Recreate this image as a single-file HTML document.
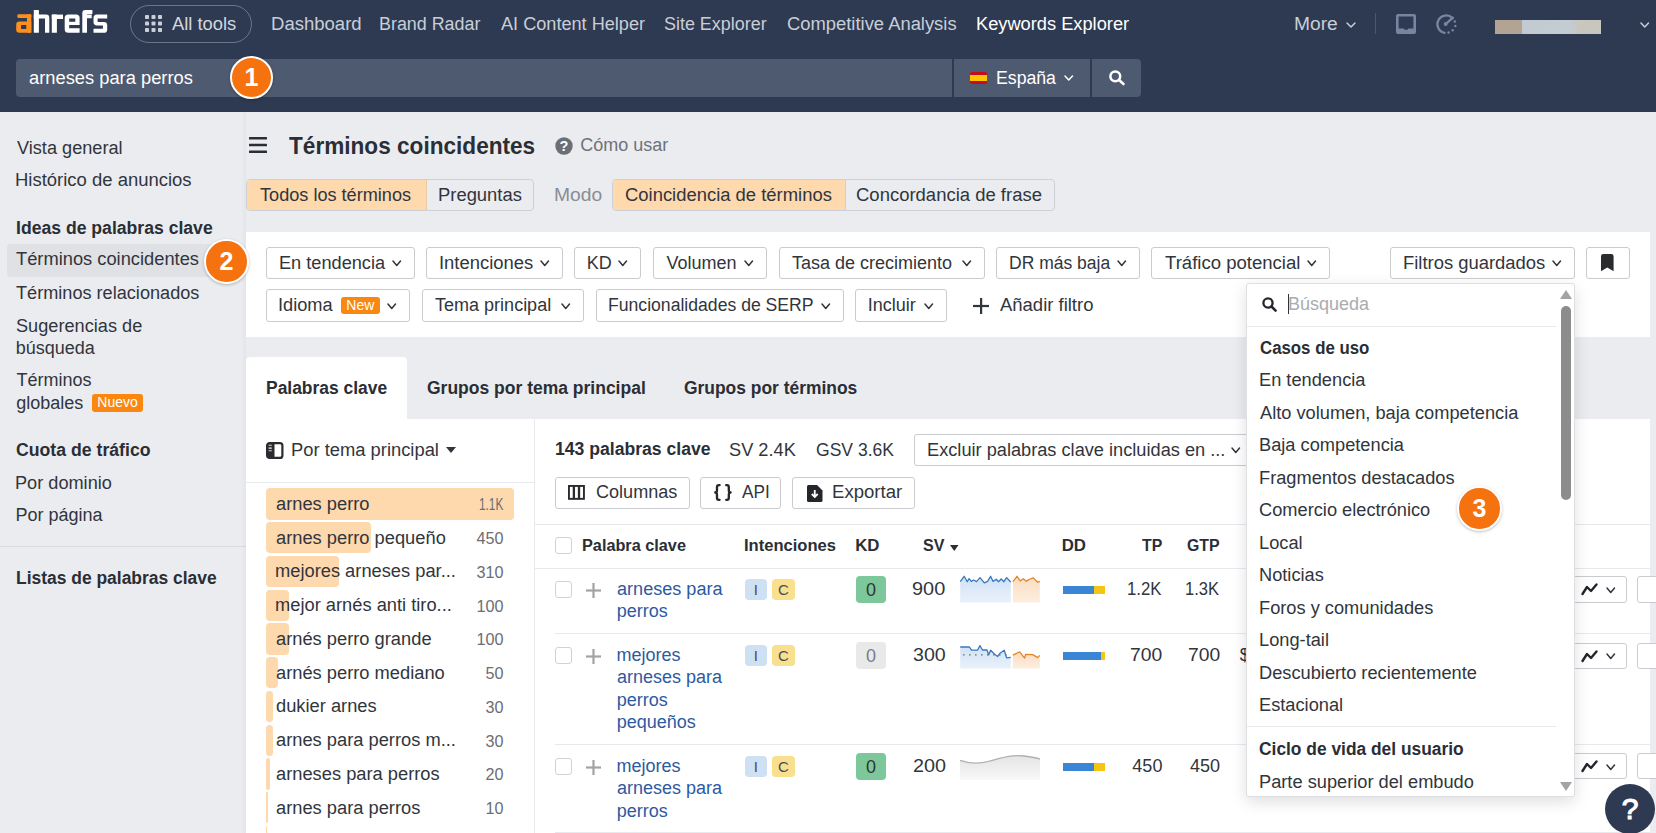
<!DOCTYPE html><html><head><meta charset="utf-8"><style>
html,body{margin:0;padding:0;}
body{width:1656px;height:833px;position:relative;overflow:hidden;background:#ebecef;font-family:"Liberation Sans", sans-serif;}
.t{position:absolute;white-space:nowrap;}
</style></head><body>
<div style="position:absolute;left:0.0px;top:0.0px;width:1656.0px;height:112.0px;background:#2e3a52;"></div>
<svg style="position:absolute;left:0.0px;top:0.0px;overflow:visible;" width="120" height="40" viewBox="0 0 120 40"><g fill="#ff8f1c"><rect x="17.4" y="14.3" width="13.90" height="3.60" rx="1.2"/><rect x="27" y="14.3" width="4.30" height="18.50" rx="0.8"/><path fill-rule="evenodd" d="M19.4 21.5 H31.3 V32.8 H19.4 Q16.2 32.8 16.2 29.6 V24.7 Q16.2 21.5 19.4 21.5 Z M21.8 25.1 H26.3 V29 H21.8 Q21 29 21 28.2 V25.9 Q21 25.1 21.8 25.1 Z"/></g><g fill="#ffffff"><rect x="33.8" y="10" width="5.10" height="22.80" rx="0.6"/><path d="M33.8 14.6 H46 Q49.3 14.6 49.3 17.9 V32.8 H45 V18.6 H33.8 Z"/><rect x="51.8" y="14.6" width="5.10" height="18.20" rx="0.6"/><path d="M51.8 14.6 H63 V19 H51.8 Z"/><path fill-rule="evenodd" d="M68.2 14.5 H76.1 Q79.6 14.5 79.6 18 V25 H69.2 V28.3 H79.6 V32.8 H68.2 Q64.7 32.8 64.7 29.3 V18 Q64.7 14.5 68.2 14.5 Z M69.2 18.6 V21.8 H75.3 V18.6 Z"/><path d="M85.3 10 H92.4 V13.9 H87 V14.6 H91.7 V18.2 H87 V32.8 H82.3 V13 Q82.3 10 85.3 10 Z"/><path d="M97 14.5 H107.2 V18.6 H97.6 V21.9 H103.8 Q107.2 21.9 107.2 25.3 V29.4 Q107.2 32.8 103.8 32.8 H93.5 V28.7 H102.9 V25.5 H96.9 Q93.5 25.5 93.5 22.1 V18 Q93.5 14.5 97 14.5 Z"/></g></svg>
<div style="position:absolute;left:129.5px;top:5.0px;width:122.5px;height:37.5px;border:1px solid rgba(255,255,255,0.30);border-radius:19px;box-sizing:border-box;"></div>
<svg style="position:absolute;left:145.0px;top:15.0px;overflow:visible;" width="17" height="17" viewBox="0 0 17 17"><rect x="0.0" y="0.0" width="4" height="4" rx="0.8" fill="#c9ced8"/><rect x="6.5" y="0.0" width="4" height="4" rx="0.8" fill="#c9ced8"/><rect x="13.0" y="0.0" width="4" height="4" rx="0.8" fill="#c9ced8"/><rect x="0.0" y="6.5" width="4" height="4" rx="0.8" fill="#c9ced8"/><rect x="6.5" y="6.5" width="4" height="4" rx="0.8" fill="#c9ced8"/><rect x="13.0" y="6.5" width="4" height="4" rx="0.8" fill="#c9ced8"/><rect x="0.0" y="13.0" width="4" height="4" rx="0.8" fill="#c9ced8"/><rect x="6.5" y="13.0" width="4" height="4" rx="0.8" fill="#c9ced8"/><rect x="13.0" y="13.0" width="4" height="4" rx="0.8" fill="#c9ced8"/></svg>
<div class="t" style="left:172.46px;top:12.76px;font-size:18px;line-height:23px;font-weight:400;color:#d3d7de;transform:scaleX(1.0186);transform-origin:0 0;">All tools</div>
<div class="t" style="left:270.98px;top:12.76px;font-size:18px;line-height:23px;font-weight:400;color:#c9ced7;transform:scaleX(1.0290);transform-origin:0 0;">Dashboard</div>
<div class="t" style="left:379.43px;top:12.76px;font-size:18px;line-height:23px;font-weight:400;color:#c9ced7;transform:scaleX(0.9932);transform-origin:0 0;">Brand Radar</div>
<div class="t" style="left:500.96px;top:12.76px;font-size:18px;line-height:23px;font-weight:400;color:#c9ced7;transform:scaleX(1.0067);transform-origin:0 0;">AI Content Helper</div>
<div class="t" style="left:664.39px;top:12.76px;font-size:18px;line-height:23px;font-weight:400;color:#c9ced7;transform:scaleX(0.9958);transform-origin:0 0;">Site Explorer</div>
<div class="t" style="left:786.57px;top:12.76px;font-size:18px;line-height:23px;font-weight:400;color:#c9ced7;transform:scaleX(1.0212);transform-origin:0 0;">Competitive Analysis</div>
<div class="t" style="left:975.90px;top:12.76px;font-size:18px;line-height:23px;font-weight:400;color:#ffffff;transform:scaleX(1.0135);transform-origin:0 0;">Keywords Explorer</div>
<div class="t" style="left:1294.33px;top:12.76px;font-size:18px;line-height:23px;font-weight:400;color:#c9ced7;transform:scaleX(1.0663);transform-origin:0 0;">More</div>
<svg style="position:absolute;left:1345.5px;top:21.5px;overflow:visible;" width="10" height="6" viewBox="0 0 10 6"><polyline points="1,1 5.0,5 9,1" fill="none" stroke="#c9ced7" stroke-width="1.5" stroke-linecap="round" stroke-linejoin="round"/></svg>
<div style="position:absolute;left:1375.0px;top:13.0px;width:1.0px;height:21.0px;background:rgba(255,255,255,0.15);"></div>
<svg style="position:absolute;left:1396.0px;top:14.0px;overflow:visible;" width="20" height="20" viewBox="0 0 20 20"><rect x="1.3" y="1.3" width="17.4" height="17.4" rx="0.8" fill="none" stroke="#7884a0" stroke-width="2.6"/><path d="M1 14.4 H8.2 V15.8 H11.8 V14.4 H19 V19.2 H1 Z" fill="#7884a0"/></svg>
<svg style="position:absolute;left:1435.5px;top:14.0px;overflow:visible;" width="21" height="20" viewBox="0 0 21 20"><g fill="#7884a0"><path d="M16.6 4.2 A8.8 8.8 0 1 0 8.6 18.9" fill="none" stroke="#7884a0" stroke-width="2.3" stroke-linecap="round"/><path d="M9.7 10.1 L16.8 3.6" stroke="#7884a0" stroke-width="2.3" stroke-linecap="round"/><circle cx="9.7" cy="10.1" r="2"/><circle cx="18.8" cy="7.5" r="1.25"/><circle cx="19.3" cy="12" r="1.25"/><circle cx="16.7" cy="16.2" r="1.25"/><circle cx="12.6" cy="18.4" r="1.25"/></g></svg>
<div style="position:absolute;left:1494.6px;top:20px;width:106.7px;height:14px;background:linear-gradient(90deg,#b3a393 0%,#b3a393 25%,#c2cad1 25.5%,#c4ccd3 70%,#c9c6be 80%,#c9c6be 100%);"></div>
<svg style="position:absolute;left:1640.2px;top:22.0px;overflow:visible;" width="9.5" height="6" viewBox="0 0 9.5 6"><polyline points="1,1 4.75,5 8.5,1" fill="none" stroke="#c9ced7" stroke-width="1.5" stroke-linecap="round" stroke-linejoin="round"/></svg>
<div style="position:absolute;left:16.0px;top:58.6px;width:936.0px;height:38.2px;background:#4e5a70;border-radius:4px 0 0 4px;"></div>
<div style="position:absolute;left:954.0px;top:58.6px;width:136.3px;height:38.2px;background:#4e5a70;"></div>
<div style="position:absolute;left:1092.0px;top:58.6px;width:49.0px;height:38.2px;background:#4e5a70;border-radius:0 4px 4px 0;"></div>
<div class="t" style="left:29.22px;top:67.26px;font-size:18px;line-height:23px;font-weight:400;color:#ffffff;transform:scaleX(1.0171);transform-origin:0 0;">arneses para perros</div>
<svg style="position:absolute;left:970.0px;top:71.6px;overflow:visible;" width="17" height="12" viewBox="0 0 17 12"><rect width="17" height="12" rx="2" fill="#c60b1e"/><rect y="3" width="17" height="6" fill="#ffc400"/></svg>
<div class="t" style="left:996.25px;top:67.06px;font-size:18px;line-height:23px;font-weight:400;color:#ffffff;transform:scaleX(0.9820);transform-origin:0 0;">España</div>
<svg style="position:absolute;left:1064.0px;top:75.0px;overflow:visible;" width="9.5" height="6" viewBox="0 0 9.5 6"><polyline points="1,1 4.75,5 8.5,1" fill="none" stroke="#ffffff" stroke-width="1.5" stroke-linecap="round" stroke-linejoin="round"/></svg>
<svg style="position:absolute;left:1108.5px;top:70.0px;overflow:visible;" width="17" height="15" viewBox="0 0 17 15"><circle cx="6.3" cy="6.3" r="4.9" fill="none" stroke="#fff" stroke-width="2.5"/><line x1="10" y1="10" x2="14.5" y2="14" stroke="#fff" stroke-width="2.6" stroke-linecap="round"/></svg>
<div style="position:absolute;left:6.5px;top:244.2px;width:233.5px;height:32.8px;background:#dfe1e5;border-radius:4px;"></div>
<div class="t" style="left:16.82px;top:137.36px;font-size:18px;line-height:23px;font-weight:400;color:#31353c;transform:scaleX(1.0079);transform-origin:0 0;">Vista general</div>
<div class="t" style="left:15.38px;top:168.76px;font-size:18px;line-height:23px;font-weight:400;color:#31353c;transform:scaleX(1.0261);transform-origin:0 0;">Histórico de anuncios</div>
<div class="t" style="left:15.72px;top:217.16px;font-size:18px;line-height:23px;font-weight:700;color:#2a2e35;transform:scaleX(0.9779);transform-origin:0 0;">Ideas de palabras clave</div>
<div class="t" style="left:16.49px;top:248.46px;font-size:18px;line-height:23px;font-weight:400;color:#31353c;transform:scaleX(1.0161);transform-origin:0 0;">Términos coincidentes</div>
<div class="t" style="left:16.49px;top:281.96px;font-size:18px;line-height:23px;font-weight:400;color:#31353c;transform:scaleX(1.0070);transform-origin:0 0;">Términos relacionados</div>
<div class="t" style="left:16.08px;top:314.76px;font-size:18px;line-height:23px;font-weight:400;color:#31353c;transform:scaleX(1.0092);transform-origin:0 0;">Sugerencias de</div>
<div class="t" style="left:15.74px;top:336.96px;font-size:18px;line-height:23px;font-weight:400;color:#31353c;">búsqueda</div>
<div class="t" style="left:16.50px;top:368.86px;font-size:18px;line-height:23px;font-weight:400;color:#31353c;">Términos</div>
<div class="t" style="left:16.14px;top:391.86px;font-size:18px;line-height:23px;font-weight:400;color:#31353c;">globales</div>
<div class="t" style="left:16.18px;top:438.76px;font-size:18px;line-height:23px;font-weight:700;color:#2a2e35;transform:scaleX(0.9818);transform-origin:0 0;">Cuota de tráfico</div>
<div class="t" style="left:15.41px;top:471.76px;font-size:18px;line-height:23px;font-weight:400;color:#31353c;transform:scaleX(1.0084);transform-origin:0 0;">Por dominio</div>
<div class="t" style="left:15.42px;top:504.06px;font-size:18px;line-height:23px;font-weight:400;color:#31353c;">Por página</div>
<div class="t" style="left:15.73px;top:567.36px;font-size:18px;line-height:23px;font-weight:700;color:#2a2e35;transform:scaleX(0.9689);transform-origin:0 0;">Listas de palabras clave</div>
<div style="position:absolute;left:92.2px;top:394px;width:50.7px;height:17.7px;background:#f98710;border-radius:3px;color:#fff;font-size:14px;line-height:17.7px;text-align:center;font-weight:400;">Nuevo</div>
<div style="position:absolute;left:0.0px;top:545.5px;width:246.0px;height:1.0px;background:#d9dbe0;"></div>
<div style="position:absolute;left:240.5px;top:112.0px;width:5.5px;height:721.0px;background:linear-gradient(90deg,rgba(0,0,0,0),rgba(0,0,0,0.03));"></div>
<svg style="position:absolute;left:249.0px;top:137.0px;overflow:visible;" width="18" height="16" viewBox="0 0 18 16"><rect y="0" width="18" height="2.6" rx="0.5" fill="#2a2e35"/><rect y="6.7" width="18" height="2.6" rx="0.5" fill="#2a2e35"/><rect y="13.4" width="18" height="2.6" rx="0.5" fill="#2a2e35"/></svg>
<div class="t" style="left:289.15px;top:130.08px;font-size:24px;line-height:31px;font-weight:700;color:#2a2e35;transform:scaleX(0.9418);transform-origin:0 0;">Términos coincidentes</div>
<svg style="position:absolute;left:554.5px;top:136.5px;overflow:visible;" width="18" height="18" viewBox="0 0 18 18"><circle cx="9" cy="9" r="8.7" fill="#6b6e74"/><text x="9" y="14.3" text-anchor="middle" font-family="Liberation Sans" font-weight="700" font-size="14.5" fill="#fff">?</text></svg>
<div class="t" style="left:580.19px;top:134.26px;font-size:18px;line-height:23px;font-weight:400;color:#6f7277;">Cómo usar</div>
<div style="position:absolute;left:246.1px;top:179.2px;width:288.3px;height:32.3px;border:1px solid #cdd0d4;border-radius:4px;box-sizing:border-box;overflow:hidden;"><div style="position:absolute;left:-1px;top:-1px;width:181.4px;height:32.3px;background:#fdd9ad;border:1px solid #e9caa3;box-sizing:border-box;"></div></div>
<div class="t" style="left:260.39px;top:183.76px;font-size:18px;line-height:23px;font-weight:400;color:#31353c;transform:scaleX(1.0066);transform-origin:0 0;">Todos los términos</div>
<div class="t" style="left:437.89px;top:183.76px;font-size:18px;line-height:23px;font-weight:400;color:#31353c;transform:scaleX(1.0222);transform-origin:0 0;">Preguntas</div>
<div class="t" style="left:553.72px;top:183.76px;font-size:18px;line-height:23px;font-weight:400;color:#8a8d93;transform:scaleX(1.0702);transform-origin:0 0;">Modo</div>
<div style="position:absolute;left:612.1px;top:179.2px;width:443.2px;height:32.3px;border:1px solid #cdd0d4;border-radius:4px;box-sizing:border-box;overflow:hidden;"><div style="position:absolute;left:-1px;top:-1px;width:233.5px;height:32.3px;background:#fdd9ad;border:1px solid #e9caa3;box-sizing:border-box;"></div></div>
<div class="t" style="left:624.76px;top:183.76px;font-size:18px;line-height:23px;font-weight:400;color:#31353c;transform:scaleX(1.0237);transform-origin:0 0;">Coincidencia de términos</div>
<div class="t" style="left:856.26px;top:183.76px;font-size:18px;line-height:23px;font-weight:400;color:#31353c;transform:scaleX(1.0268);transform-origin:0 0;">Concordancia de frase</div>
<div style="position:absolute;left:245.6px;top:232.1px;width:1404.4px;height:104.7px;background:#fff;"></div>
<div style="position:absolute;left:266.1px;top:247.3px;width:149.4px;height:31.7px;border:1px solid #c9cbcf;border-radius:3px;box-sizing:border-box;background:#fff;"></div>
<div class="t" style="left:278.51px;top:251.66px;font-size:18px;line-height:23px;font-weight:400;color:#31353c;transform:scaleX(1.0096);transform-origin:0 0;">En tendencia</div>
<svg style="position:absolute;left:392.2px;top:260.4px;overflow:visible;" width="9.5" height="6.5" viewBox="0 0 9.5 6.5"><polyline points="1,1 4.75,5.5 8.5,1" fill="none" stroke="#31353c" stroke-width="1.5" stroke-linecap="round" stroke-linejoin="round"/></svg>
<div style="position:absolute;left:426.4px;top:247.3px;width:137.0px;height:31.7px;border:1px solid #c9cbcf;border-radius:3px;box-sizing:border-box;background:#fff;"></div>
<div class="t" style="left:438.60px;top:251.66px;font-size:18px;line-height:23px;font-weight:400;color:#31353c;transform:scaleX(1.0239);transform-origin:0 0;">Intenciones</div>
<svg style="position:absolute;left:540.1px;top:260.4px;overflow:visible;" width="9.5" height="6.5" viewBox="0 0 9.5 6.5"><polyline points="1,1 4.75,5.5 8.5,1" fill="none" stroke="#31353c" stroke-width="1.5" stroke-linecap="round" stroke-linejoin="round"/></svg>
<div style="position:absolute;left:574.3px;top:247.3px;width:67.2px;height:31.7px;border:1px solid #c9cbcf;border-radius:3px;box-sizing:border-box;background:#fff;"></div>
<div class="t" style="left:586.72px;top:251.66px;font-size:18px;line-height:23px;font-weight:400;color:#31353c;">KD</div>
<svg style="position:absolute;left:618.2px;top:260.4px;overflow:visible;" width="9.5" height="6.5" viewBox="0 0 9.5 6.5"><polyline points="1,1 4.75,5.5 8.5,1" fill="none" stroke="#31353c" stroke-width="1.5" stroke-linecap="round" stroke-linejoin="round"/></svg>
<div style="position:absolute;left:652.6px;top:247.3px;width:114.9px;height:31.7px;border:1px solid #c9cbcf;border-radius:3px;box-sizing:border-box;background:#fff;"></div>
<div class="t" style="left:666.42px;top:251.66px;font-size:18px;line-height:23px;font-weight:400;color:#31353c;">Volumen</div>
<svg style="position:absolute;left:744.2px;top:260.4px;overflow:visible;" width="9.5" height="6.5" viewBox="0 0 9.5 6.5"><polyline points="1,1 4.75,5.5 8.5,1" fill="none" stroke="#31353c" stroke-width="1.5" stroke-linecap="round" stroke-linejoin="round"/></svg>
<div style="position:absolute;left:778.5px;top:247.3px;width:206.9px;height:31.7px;border:1px solid #c9cbcf;border-radius:3px;box-sizing:border-box;background:#fff;"></div>
<div class="t" style="left:792.00px;top:251.66px;font-size:18px;line-height:23px;font-weight:400;color:#31353c;">Tasa de crecimiento</div>
<svg style="position:absolute;left:962.1px;top:260.4px;overflow:visible;" width="9.5" height="6.5" viewBox="0 0 9.5 6.5"><polyline points="1,1 4.75,5.5 8.5,1" fill="none" stroke="#31353c" stroke-width="1.5" stroke-linecap="round" stroke-linejoin="round"/></svg>
<div style="position:absolute;left:996.4px;top:247.3px;width:143.8px;height:31.7px;border:1px solid #c9cbcf;border-radius:3px;box-sizing:border-box;background:#fff;"></div>
<div class="t" style="left:1008.86px;top:251.66px;font-size:18px;line-height:23px;font-weight:400;color:#31353c;transform:scaleX(0.9721);transform-origin:0 0;">DR más baja</div>
<svg style="position:absolute;left:1117.0px;top:260.4px;overflow:visible;" width="9.5" height="6.5" viewBox="0 0 9.5 6.5"><polyline points="1,1 4.75,5.5 8.5,1" fill="none" stroke="#31353c" stroke-width="1.5" stroke-linecap="round" stroke-linejoin="round"/></svg>
<div style="position:absolute;left:1151.2px;top:247.3px;width:179.2px;height:31.7px;border:1px solid #c9cbcf;border-radius:3px;box-sizing:border-box;background:#fff;"></div>
<div class="t" style="left:1164.68px;top:251.66px;font-size:18px;line-height:23px;font-weight:400;color:#31353c;transform:scaleX(1.0302);transform-origin:0 0;">Tráfico potencial</div>
<svg style="position:absolute;left:1307.2px;top:260.4px;overflow:visible;" width="9.5" height="6.5" viewBox="0 0 9.5 6.5"><polyline points="1,1 4.75,5.5 8.5,1" fill="none" stroke="#31353c" stroke-width="1.5" stroke-linecap="round" stroke-linejoin="round"/></svg>
<div style="position:absolute;left:1390.2px;top:247.3px;width:185.1px;height:31.7px;border:1px solid #c9cbcf;border-radius:3px;box-sizing:border-box;background:#fff;"></div>
<div class="t" style="left:1402.59px;top:251.66px;font-size:18px;line-height:23px;font-weight:400;color:#31353c;transform:scaleX(1.0231);transform-origin:0 0;">Filtros guardados</div>
<svg style="position:absolute;left:1552.0px;top:260.4px;overflow:visible;" width="9.5" height="6.5" viewBox="0 0 9.5 6.5"><polyline points="1,1 4.75,5.5 8.5,1" fill="none" stroke="#31353c" stroke-width="1.5" stroke-linecap="round" stroke-linejoin="round"/></svg>
<div style="position:absolute;left:1586.2px;top:247.3px;width:43.4px;height:31.7px;border:1px solid #c9cbcf;border-radius:3px;box-sizing:border-box;background:#fff;"></div>
<svg style="position:absolute;left:1601.4px;top:253.8px;overflow:visible;" width="12.6" height="17.3" viewBox="0 0 12.6 17.3"><path d="M0 2.2 Q0 0 2.2 0 H10.4 Q12.6 0 12.6 2.2 V17.3 L6.3 13.6 L0 17.3 Z" fill="#2a2c30"/></svg>
<div style="position:absolute;left:266.1px;top:289.2px;width:144.3px;height:32.4px;border:1px solid #c9cbcf;border-radius:3px;box-sizing:border-box;background:#fff;"></div>
<div class="t" style="left:278.32px;top:293.76px;font-size:18px;line-height:23px;font-weight:400;color:#31353c;transform:scaleX(1.0121);transform-origin:0 0;">Idioma</div>
<svg style="position:absolute;left:387.1px;top:302.6px;overflow:visible;" width="9.5" height="6.5" viewBox="0 0 9.5 6.5"><polyline points="1,1 4.75,5.5 8.5,1" fill="none" stroke="#31353c" stroke-width="1.5" stroke-linecap="round" stroke-linejoin="round"/></svg>
<div style="position:absolute;left:341px;top:297px;width:38.7px;height:16.8px;background:#f98710;border-radius:3px;color:#fff;font-size:14px;line-height:16.8px;text-align:center;">New</div>
<div style="position:absolute;left:421.6px;top:289.2px;width:162.8px;height:32.4px;border:1px solid #c9cbcf;border-radius:3px;box-sizing:border-box;background:#fff;"></div>
<div class="t" style="left:435.10px;top:293.76px;font-size:18px;line-height:23px;font-weight:400;color:#31353c;">Tema principal</div>
<svg style="position:absolute;left:561.1px;top:302.6px;overflow:visible;" width="9.5" height="6.5" viewBox="0 0 9.5 6.5"><polyline points="1,1 4.75,5.5 8.5,1" fill="none" stroke="#31353c" stroke-width="1.5" stroke-linecap="round" stroke-linejoin="round"/></svg>
<div style="position:absolute;left:595.6px;top:289.2px;width:248.8px;height:32.4px;border:1px solid #c9cbcf;border-radius:3px;box-sizing:border-box;background:#fff;"></div>
<div class="t" style="left:608.06px;top:293.76px;font-size:18px;line-height:23px;font-weight:400;color:#31353c;transform:scaleX(0.9783);transform-origin:0 0;">Funcionalidades de SERP</div>
<svg style="position:absolute;left:821.1px;top:302.6px;overflow:visible;" width="9.5" height="6.5" viewBox="0 0 9.5 6.5"><polyline points="1,1 4.75,5.5 8.5,1" fill="none" stroke="#31353c" stroke-width="1.5" stroke-linecap="round" stroke-linejoin="round"/></svg>
<div style="position:absolute;left:855.4px;top:289.2px;width:91.6px;height:32.4px;border:1px solid #c9cbcf;border-radius:3px;box-sizing:border-box;background:#fff;"></div>
<div class="t" style="left:867.64px;top:293.76px;font-size:18px;line-height:23px;font-weight:400;color:#31353c;">Incluir</div>
<svg style="position:absolute;left:923.8px;top:302.6px;overflow:visible;" width="9.5" height="6.5" viewBox="0 0 9.5 6.5"><polyline points="1,1 4.75,5.5 8.5,1" fill="none" stroke="#31353c" stroke-width="1.5" stroke-linecap="round" stroke-linejoin="round"/></svg>
<svg style="position:absolute;left:972.5px;top:298.0px;overflow:visible;" width="16" height="16" viewBox="0 0 16 16"><rect x="7" y="0" width="2.2" height="16" fill="#31353c"/><rect x="0" y="6.9" width="16" height="2.2" fill="#31353c"/></svg>
<div class="t" style="left:1000.36px;top:293.76px;font-size:18px;line-height:23px;font-weight:400;color:#31353c;transform:scaleX(1.0261);transform-origin:0 0;">Añadir filtro</div>
<div style="position:absolute;left:246px;top:356.7px;width:160.6px;height:62px;background:#fff;border-radius:4px 4px 0 0;"></div>
<div class="t" style="left:266.13px;top:376.86px;font-size:18px;line-height:23px;font-weight:700;color:#2a2e35;transform:scaleX(0.9686);transform-origin:0 0;">Palabras clave</div>
<div class="t" style="left:426.98px;top:376.86px;font-size:18px;line-height:23px;font-weight:700;color:#2a2e35;transform:scaleX(0.9721);transform-origin:0 0;">Grupos por tema principal</div>
<div class="t" style="left:684.49px;top:376.86px;font-size:18px;line-height:23px;font-weight:700;color:#2a2e35;transform:scaleX(0.9677);transform-origin:0 0;">Grupos por términos</div>
<div style="position:absolute;left:246.0px;top:418.5px;width:1404.0px;height:414.5px;background:#fff;"></div>
<svg style="position:absolute;left:266.1px;top:442.0px;overflow:visible;" width="17.5" height="17" viewBox="0 0 17.5 17"><rect x="1.1" y="1.1" width="15.3" height="14.8" rx="2.5" fill="none" stroke="#2a2c30" stroke-width="2.2"/><rect x="1" y="1" width="7.5" height="15" rx="1.5" fill="#2a2c30"/><rect x="2.6" y="2.7" width="3.2" height="1.2" fill="#bbb"/><rect x="2.6" y="5.5" width="3.2" height="1.2" fill="#fff"/><rect x="2.6" y="8.1" width="3.2" height="1.2" fill="#bbb"/></svg>
<div class="t" style="left:290.79px;top:439.26px;font-size:18px;line-height:23px;font-weight:400;color:#31353c;transform:scaleX(1.0198);transform-origin:0 0;">Por tema principal</div>
<svg style="position:absolute;left:446.0px;top:447.0px;overflow:visible;" width="10" height="6" viewBox="0 0 10 6"><path d="M0 0 H10 L5 6 Z" fill="#31353c"/></svg>
<div style="position:absolute;left:246.0px;top:482.0px;width:287.5px;height:1.0px;background:#e7e9ec;"></div>
<div style="position:absolute;left:534.0px;top:418.5px;width:1.0px;height:414.5px;background:#e7e9ec;"></div>
<div style="position:absolute;left:266.2px;top:488.2px;width:247.4px;height:31.4px;background:#fdd9ad;border-radius:4px;"></div>
<div class="t" style="left:275.62px;top:492.86px;font-size:18px;line-height:23px;font-weight:400;color:#31353c;transform:scaleX(1.0160);transform-origin:0 0;">arnes perro</div>
<div class="t" style="left:478.60px;top:494.49px;font-size:16.2px;line-height:21px;font-weight:400;color:#6b6e74;transform:scaleX(0.7302);transform-origin:0 0;">1.1K</div>
<div style="position:absolute;left:266.2px;top:522.0px;width:104.8px;height:31.4px;background:#fdd9ad;border-radius:4px;"></div>
<div class="t" style="left:275.62px;top:526.61px;font-size:18px;line-height:23px;font-weight:400;color:#31353c;transform:scaleX(1.0160);transform-origin:0 0;">arnes perro pequeño</div>
<div class="t" style="left:476.40px;top:528.24px;font-size:16.2px;line-height:21px;font-weight:400;color:#6b6e74;">450</div>
<div style="position:absolute;left:266.2px;top:555.7px;width:72.8px;height:31.4px;background:#fdd9ad;border-radius:4px;"></div>
<div class="t" style="left:275.19px;top:560.36px;font-size:18px;line-height:23px;font-weight:400;color:#31353c;transform:scaleX(1.0160);transform-origin:0 0;">mejores arneses par...</div>
<div class="t" style="left:476.40px;top:561.99px;font-size:16.2px;line-height:21px;font-weight:400;color:#6b6e74;">310</div>
<div style="position:absolute;left:266.2px;top:589.5px;width:22.7px;height:31.4px;background:#fdd9ad;border-radius:4px;"></div>
<div class="t" style="left:275.19px;top:594.11px;font-size:18px;line-height:23px;font-weight:400;color:#31353c;transform:scaleX(1.0160);transform-origin:0 0;">mejor arnés anti tiro...</div>
<div class="t" style="left:476.40px;top:595.74px;font-size:16.2px;line-height:21px;font-weight:400;color:#6b6e74;">100</div>
<div style="position:absolute;left:266.2px;top:623.2px;width:22.7px;height:31.4px;background:#fdd9ad;border-radius:4px;"></div>
<div class="t" style="left:275.62px;top:627.86px;font-size:18px;line-height:23px;font-weight:400;color:#31353c;transform:scaleX(1.0160);transform-origin:0 0;">arnés perro grande</div>
<div class="t" style="left:476.40px;top:629.49px;font-size:16.2px;line-height:21px;font-weight:400;color:#6b6e74;">100</div>
<div style="position:absolute;left:266.2px;top:657.0px;width:11.8px;height:31.4px;background:#fdd9ad;border-radius:4px;"></div>
<div class="t" style="left:275.62px;top:661.61px;font-size:18px;line-height:23px;font-weight:400;color:#31353c;transform:scaleX(1.0160);transform-origin:0 0;">arnés perro mediano</div>
<div class="t" style="left:485.41px;top:663.24px;font-size:16.2px;line-height:21px;font-weight:400;color:#6b6e74;">50</div>
<div style="position:absolute;left:266.2px;top:690.7px;width:7.0px;height:31.4px;background:#fdd9ad;border-radius:4px;"></div>
<div class="t" style="left:275.63px;top:695.36px;font-size:18px;line-height:23px;font-weight:400;color:#31353c;transform:scaleX(1.0160);transform-origin:0 0;">dukier arnes</div>
<div class="t" style="left:485.41px;top:696.99px;font-size:16.2px;line-height:21px;font-weight:400;color:#6b6e74;">30</div>
<div style="position:absolute;left:266.2px;top:724.5px;width:6.4px;height:31.4px;background:#fdd9ad;border-radius:4px;"></div>
<div class="t" style="left:275.62px;top:729.11px;font-size:18px;line-height:23px;font-weight:400;color:#31353c;transform:scaleX(1.0160);transform-origin:0 0;">arnes para perros m...</div>
<div class="t" style="left:485.41px;top:730.74px;font-size:16.2px;line-height:21px;font-weight:400;color:#6b6e74;">30</div>
<div style="position:absolute;left:266.2px;top:758.2px;width:4.3px;height:31.4px;background:#fdd9ad;border-radius:4px;"></div>
<div class="t" style="left:275.62px;top:762.86px;font-size:18px;line-height:23px;font-weight:400;color:#31353c;transform:scaleX(1.0160);transform-origin:0 0;">arneses para perros</div>
<div class="t" style="left:485.41px;top:764.49px;font-size:16.2px;line-height:21px;font-weight:400;color:#6b6e74;">20</div>
<div style="position:absolute;left:266.2px;top:792.0px;width:2.0px;height:31.4px;background:#fdd9ad;border-radius:4px;"></div>
<div class="t" style="left:275.62px;top:796.61px;font-size:18px;line-height:23px;font-weight:400;color:#31353c;transform:scaleX(1.0160);transform-origin:0 0;">arnes para perros</div>
<div class="t" style="left:485.41px;top:798.24px;font-size:16.2px;line-height:21px;font-weight:400;color:#6b6e74;">10</div>
<div style="position:absolute;left:266.2px;top:825.7px;width:1.3px;height:31.4px;background:#fdd9ad;border-radius:4px;"></div>
<div class="t" style="left:554.59px;top:438.46px;font-size:18px;line-height:23px;font-weight:700;color:#2a2e35;transform:scaleX(0.9773);transform-origin:0 0;">143 palabras clave</div>
<div class="t" style="left:729.37px;top:438.76px;font-size:18px;line-height:23px;font-weight:400;color:#31353c;transform:scaleX(1.0120);transform-origin:0 0;">SV 2.4K</div>
<div class="t" style="left:815.82px;top:438.76px;font-size:18px;line-height:23px;font-weight:400;color:#31353c;transform:scaleX(0.9742);transform-origin:0 0;">GSV 3.6K</div>
<div style="position:absolute;left:913.9px;top:433.7px;width:342.1px;height:32.6px;border:1px solid #c9cbcf;border-radius:3px;box-sizing:border-box;background:#fff;"></div>
<div class="t" style="left:926.81px;top:438.76px;font-size:18px;line-height:23px;font-weight:400;color:#31353c;transform:scaleX(1.0109);transform-origin:0 0;">Excluir palabras clave incluidas en ...</div>
<svg style="position:absolute;left:1230.8px;top:447.2px;overflow:visible;" width="9.5" height="6.5" viewBox="0 0 9.5 6.5"><polyline points="1,1 4.75,5.5 8.5,1" fill="none" stroke="#31353c" stroke-width="1.5" stroke-linecap="round" stroke-linejoin="round"/></svg>
<div style="position:absolute;left:554.9px;top:477.0px;width:134.7px;height:32.0px;border:1px solid #c9cbcf;border-radius:3px;box-sizing:border-box;background:#fff;"></div>
<div class="t" style="left:596.08px;top:481.26px;font-size:18px;line-height:23px;font-weight:400;color:#31353c;transform:scaleX(1.0041);transform-origin:0 0;">Columnas</div>
<div style="position:absolute;left:700.3px;top:477.0px;width:81.0px;height:32.0px;border:1px solid #c9cbcf;border-radius:3px;box-sizing:border-box;background:#fff;"></div>
<div class="t" style="left:742.17px;top:481.26px;font-size:18px;line-height:23px;font-weight:400;color:#31353c;transform:scaleX(0.9555);transform-origin:0 0;">API</div>
<div style="position:absolute;left:792.4px;top:477.0px;width:122.8px;height:32.0px;border:1px solid #c9cbcf;border-radius:3px;box-sizing:border-box;background:#fff;"></div>
<div class="t" style="left:832.38px;top:481.26px;font-size:18px;line-height:23px;font-weight:400;color:#31353c;transform:scaleX(1.0309);transform-origin:0 0;">Exportar</div>
<svg style="position:absolute;left:568.3px;top:484.8px;overflow:visible;" width="16.9" height="14.8" viewBox="0 0 16.9 14.8"><rect x="0.95" y="0.95" width="15" height="12.9" fill="none" stroke="#2a2c30" stroke-width="1.9"/><rect x="4.73" y="0.5" width="2.3" height="13.8" fill="#2a2c30"/><rect x="9.86" y="0.5" width="2.3" height="13.8" fill="#2a2c30"/></svg>
<svg style="position:absolute;left:713.5px;top:484.0px;overflow:visible;" width="18" height="17" viewBox="0 0 18 17"><g fill="none" stroke="#23262b" stroke-width="2.3" stroke-linecap="round" stroke-linejoin="round"><path d="M5.6 1.2 H4.8 Q3 1.2 3 3 V6.3 Q3 8.5 1.2 8.5 Q3 8.5 3 10.7 V14 Q3 15.8 4.8 15.8 H5.6"/><path d="M12.2 1.2 H13 Q14.8 1.2 14.8 3 V6.3 Q14.8 8.5 16.6 8.5 Q14.8 8.5 14.8 10.7 V14 Q14.8 15.8 13 15.8 H12.2"/></g></svg>
<svg style="position:absolute;left:807.4px;top:484.5px;overflow:visible;" width="15.5" height="17" viewBox="0 0 15.5 17"><path d="M0 1.5 Q0 0 1.5 0 H10 L15.5 5.5 V15.5 Q15.5 17 14 17 H1.5 Q0 17 0 15.5 Z" fill="#23262b"/><path d="M7.75 5 V11.5 M4.8 9 L7.75 12 L10.7 9" fill="none" stroke="#fff" stroke-width="1.8"/></svg>
<div style="position:absolute;left:535.0px;top:523.6px;width:1115.0px;height:1.0px;background:#e7e9ec;"></div>
<div style="position:absolute;left:555.2px;top:537.0px;width:17.0px;height:17.0px;border:1px solid #cfd2d7;border-radius:3px;box-sizing:border-box;background:#fff;"></div>
<div class="t" style="left:581.71px;top:534.88px;font-size:16.8px;line-height:22px;font-weight:700;color:#2a2e35;transform:scaleX(0.9687);transform-origin:0 0;">Palabra clave</div>
<div class="t" style="left:744.29px;top:534.88px;font-size:16.8px;line-height:22px;font-weight:700;color:#2a2e35;transform:scaleX(0.9865);transform-origin:0 0;">Intenciones</div>
<div class="t" style="left:855.18px;top:534.88px;font-size:16.8px;line-height:22px;font-weight:700;color:#2a2e35;">KD</div>
<div class="t" style="left:922.54px;top:534.88px;font-size:16.8px;line-height:22px;font-weight:700;color:#2a2e35;transform:scaleX(0.9582);transform-origin:0 0;">SV</div>
<div class="t" style="left:1061.68px;top:534.88px;font-size:16.8px;line-height:22px;font-weight:700;color:#2a2e35;">DD</div>
<div class="t" style="left:1142.02px;top:534.88px;font-size:16.8px;line-height:22px;font-weight:700;color:#2a2e35;transform:scaleX(0.9418);transform-origin:0 0;">TP</div>
<div class="t" style="left:1187.15px;top:534.88px;font-size:16.8px;line-height:22px;font-weight:700;color:#2a2e35;transform:scaleX(0.9467);transform-origin:0 0;">GTP</div>
<svg style="position:absolute;left:950.4px;top:545.2px;overflow:visible;" width="8.5" height="6" viewBox="0 0 8.5 6"><path d="M0 0 H8.5 L4.25 6 Z" fill="#2a2e35"/></svg>
<div style="position:absolute;left:535.0px;top:568.0px;width:1115.0px;height:1.0px;background:#e7e9ec;"></div>
<div style="position:absolute;left:555.2px;top:581.0px;width:17.0px;height:17.0px;border:1px solid #cfd2d7;border-radius:3px;box-sizing:border-box;background:#fff;"></div>
<svg style="position:absolute;left:586.0px;top:582.5px;overflow:visible;" width="15" height="15" viewBox="0 0 15 15"><rect x="6.4" y="0" width="2.2" height="15" fill="#a0a3a8"/><rect x="0" y="6.4" width="15" height="2.2" fill="#a0a3a8"/></svg>
<div class="t" style="left:617.03px;top:577.96px;font-size:18px;line-height:23px;font-weight:400;color:#2d5aa0;transform:scaleX(1.0048);transform-origin:0 0;">arneses para</div>
<div class="t" style="left:616.64px;top:600.46px;font-size:18px;line-height:23px;font-weight:400;color:#2d5aa0;">perros</div>
<div style="position:absolute;left:745px;top:578.7px;width:21.7px;height:21.7px;background:#cfe0f3;border-radius:4px;color:#4a4d52;font-size:15px;line-height:22.5px;text-align:center;">I</div>
<div style="position:absolute;left:772px;top:578.7px;width:22.8px;height:21.7px;background:#f8e08e;border-radius:4px;color:#4a4d52;font-size:15px;line-height:22.5px;text-align:center;">C</div>
<div style="position:absolute;left:856.3px;top:576.0px;width:29.4px;height:27.3px;background:#7dc89a;border-radius:4px;color:#333;font-size:18px;line-height:28.5px;text-align:center;">0</div>
<div class="t" style="left:912.37px;top:577.96px;font-size:18px;line-height:23px;font-weight:400;color:#31353c;transform:scaleX(1.1058);transform-origin:0 0;">900</div>
<svg style="position:absolute;left:950px;top:570px;" width="100" height="36" viewBox="950 570 100 36"><defs><linearGradient id="gb" x1="0" y1="0" x2="0" y2="1"><stop offset="0" stop-color="#cfe2f6"/><stop offset="1" stop-color="#e9f1fa"/></linearGradient><linearGradient id="go" x1="0" y1="0" x2="0" y2="1"><stop offset="0" stop-color="#fcdcbf"/><stop offset="1" stop-color="#fdeee0"/></linearGradient><linearGradient id="gg" x1="0" y1="0" x2="0" y2="1"><stop offset="0" stop-color="#e4e4e4"/><stop offset="1" stop-color="#f9f9f9"/></linearGradient></defs><polygon points="960.2,602.6 960.2,581.7 964.2,576.3 967.2,581.7 969.1,578.7 971.3,581.4 973.8,580.0 976.5,581.7 980.0,577.6 984.3,582.8 987.6,581.4 990.6,576.3 993.0,581.4 996.3,579.2 998.5,581.7 1001.2,579.0 1003.9,581.7 1006.6,577.6 1010.7,582.0 1010.7,602.6" fill="url(#gb)"/><polyline points="960.2,581.7 964.2,576.3 967.2,581.7 969.1,578.7 971.3,581.4 973.8,580.0 976.5,581.7 980.0,577.6 984.3,582.8 987.6,581.4 990.6,576.3 993.0,581.4 996.3,579.2 998.5,581.7 1001.2,579.0 1003.9,581.7 1006.6,577.6 1010.7,582.0" fill="none" stroke="#3a78c0" stroke-width="1.3" stroke-linejoin="round"/><polygon points="1012.9,602.6 1012.9,581.7 1017.0,576.3 1020.2,580.9 1023.5,578.7 1026.2,581.4 1028.9,579.5 1033.3,577.9 1037.6,582.2 1039.8,581.4 1039.8,602.6" fill="url(#go)"/><polyline points="1012.9,581.7 1017.0,576.3 1020.2,580.9 1023.5,578.7 1026.2,581.4 1028.9,579.5 1033.3,577.9 1037.6,582.2 1039.8,581.4" fill="none" stroke="#e0862a" stroke-width="1.3" stroke-linejoin="round"/></svg>
<div style="position:absolute;left:1063.0px;top:586.0px;width:31.0px;height:8.0px;background:#3a86d4;"></div>
<div style="position:absolute;left:1094.0px;top:586.0px;width:11.0px;height:8.0px;background:#f6c513;"></div>
<div class="t" style="left:1127.42px;top:577.96px;font-size:18px;line-height:23px;font-weight:400;color:#31353c;transform:scaleX(0.9308);transform-origin:0 0;">1.2K</div>
<div class="t" style="left:1185.44px;top:577.96px;font-size:18px;line-height:23px;font-weight:400;color:#31353c;transform:scaleX(0.9195);transform-origin:0 0;">1.3K</div>
<div style="position:absolute;left:1560.0px;top:576.4px;width:66.5px;height:26.2px;border:1px solid #c9cbcf;border-radius:3px;box-sizing:border-box;background:#fff;"></div>
<svg style="position:absolute;left:1581.0px;top:583.4px;overflow:visible;" width="17" height="12" viewBox="0 0 17 12"><polyline points="1.5,11 6,4 10,8 15.5,1.5" fill="none" stroke="#23262b" stroke-width="2.4" stroke-linejoin="round" stroke-linecap="round"/></svg>
<svg style="position:absolute;left:1606.2px;top:586.8px;overflow:visible;" width="9.5" height="6.5" viewBox="0 0 9.5 6.5"><polyline points="1,1 4.75,5.5 8.5,1" fill="none" stroke="#31353c" stroke-width="1.5" stroke-linecap="round" stroke-linejoin="round"/></svg>
<div style="position:absolute;left:1637.0px;top:576.4px;width:23.0px;height:26.2px;border:1px solid #c9cbcf;border-radius:3px;box-sizing:border-box;background:#fff;"></div>
<div style="position:absolute;left:555.0px;top:633.4px;width:1095.0px;height:1.0px;background:#e7e9ec;"></div>
<div style="position:absolute;left:555.2px;top:647.0px;width:17.0px;height:17.0px;border:1px solid #cfd2d7;border-radius:3px;box-sizing:border-box;background:#fff;"></div>
<svg style="position:absolute;left:586.0px;top:648.5px;overflow:visible;" width="15" height="15" viewBox="0 0 15 15"><rect x="6.4" y="0" width="2.2" height="15" fill="#a0a3a8"/><rect x="0" y="6.4" width="15" height="2.2" fill="#a0a3a8"/></svg>
<div class="t" style="left:616.60px;top:643.96px;font-size:18px;line-height:23px;font-weight:400;color:#2d5aa0;">mejores</div>
<div class="t" style="left:617.04px;top:666.36px;font-size:18px;line-height:23px;font-weight:400;color:#2d5aa0;">arneses para</div>
<div class="t" style="left:616.64px;top:688.76px;font-size:18px;line-height:23px;font-weight:400;color:#2d5aa0;">perros</div>
<div class="t" style="left:616.64px;top:711.16px;font-size:18px;line-height:23px;font-weight:400;color:#2d5aa0;">pequeños</div>
<div style="position:absolute;left:745px;top:644.6px;width:21.7px;height:21.7px;background:#cfe0f3;border-radius:4px;color:#4a4d52;font-size:15px;line-height:22.5px;text-align:center;">I</div>
<div style="position:absolute;left:772px;top:644.6px;width:22.8px;height:21.7px;background:#f8e08e;border-radius:4px;color:#4a4d52;font-size:15px;line-height:22.5px;text-align:center;">C</div>
<div style="position:absolute;left:856.3px;top:641.7px;width:29.4px;height:27.3px;background:#e8e9eb;border-radius:4px;color:#7a7d82;font-size:18px;line-height:28.5px;text-align:center;">0</div>
<div class="t" style="left:912.85px;top:643.96px;font-size:18px;line-height:23px;font-weight:400;color:#31353c;transform:scaleX(1.0893);transform-origin:0 0;">300</div>
<svg style="position:absolute;left:950px;top:638px;" width="100" height="34" viewBox="950 638 100 34"><defs><linearGradient id="gb" x1="0" y1="0" x2="0" y2="1"><stop offset="0" stop-color="#cfe2f6"/><stop offset="1" stop-color="#e9f1fa"/></linearGradient><linearGradient id="go" x1="0" y1="0" x2="0" y2="1"><stop offset="0" stop-color="#fcdcbf"/><stop offset="1" stop-color="#fdeee0"/></linearGradient><linearGradient id="gg" x1="0" y1="0" x2="0" y2="1"><stop offset="0" stop-color="#e4e4e4"/><stop offset="1" stop-color="#f9f9f9"/></linearGradient></defs><polygon points="960.2,668.4 960.2,647.0 969.4,647.0 971.5,650.2 977.5,650.2 979.9,645.6 982.5,650.0 987.0,650.0 988.7,654.8 990.6,650.2 994.7,654.3 997.7,656.5 1000.0,653.2 1004.2,650.2 1006.6,657.8 1010.7,657.3 1010.7,668.4" fill="url(#gb)"/><polyline points="960.2,647.0 969.4,647.0 971.5,650.2 977.5,650.2 979.9,645.6 982.5,650.0 987.0,650.0 988.7,654.8 990.6,650.2 994.7,654.3 997.7,656.5 1000.0,653.2 1004.2,650.2 1006.6,657.8 1010.7,657.3" fill="none" stroke="#3a78c0" stroke-width="1.3" stroke-linejoin="round"/><line x1="963" y1="654.8" x2="1010" y2="654.8" stroke="#6f6f6f" stroke-width="1.3" stroke-dasharray="1.6,4.4"/><polygon points="1012.9,668.4 1012.9,655.1 1019.7,651.9 1024.6,658.1 1025.7,654.3 1032.7,654.6 1037.6,657.6 1039.8,655.4 1039.8,668.4" fill="url(#go)"/><polyline points="1012.9,655.1 1019.7,651.9 1024.6,658.1 1025.7,654.3 1032.7,654.6 1037.6,657.6 1039.8,655.4" fill="none" stroke="#e0862a" stroke-width="1.3" stroke-linejoin="round"/></svg>
<div style="position:absolute;left:1063.0px;top:652.0px;width:37.8px;height:8.0px;background:#3a86d4;"></div>
<div style="position:absolute;left:1100.8px;top:652.0px;width:4.2px;height:8.0px;background:#f6c513;"></div>
<div class="t" style="left:1130.31px;top:643.96px;font-size:18px;line-height:23px;font-weight:400;color:#31353c;transform:scaleX(1.0702);transform-origin:0 0;">700</div>
<div class="t" style="left:1187.61px;top:643.96px;font-size:18px;line-height:23px;font-weight:400;color:#31353c;transform:scaleX(1.0702);transform-origin:0 0;">700</div>
<div class="t" style="left:1239.81px;top:643.96px;font-size:18px;line-height:23px;font-weight:400;color:#31353c;">$</div>
<div style="position:absolute;left:1560.0px;top:642.6px;width:66.5px;height:26.5px;border:1px solid #c9cbcf;border-radius:3px;box-sizing:border-box;background:#fff;"></div>
<svg style="position:absolute;left:1581.0px;top:649.6px;overflow:visible;" width="17" height="12" viewBox="0 0 17 12"><polyline points="1.5,11 6,4 10,8 15.5,1.5" fill="none" stroke="#23262b" stroke-width="2.4" stroke-linejoin="round" stroke-linecap="round"/></svg>
<svg style="position:absolute;left:1606.2px;top:653.1px;overflow:visible;" width="9.5" height="6.5" viewBox="0 0 9.5 6.5"><polyline points="1,1 4.75,5.5 8.5,1" fill="none" stroke="#31353c" stroke-width="1.5" stroke-linecap="round" stroke-linejoin="round"/></svg>
<div style="position:absolute;left:1637.0px;top:642.6px;width:23.0px;height:26.5px;border:1px solid #c9cbcf;border-radius:3px;box-sizing:border-box;background:#fff;"></div>
<div style="position:absolute;left:555.0px;top:744.2px;width:1095.0px;height:1.0px;background:#e7e9ec;"></div>
<div style="position:absolute;left:555.2px;top:758.0px;width:17.0px;height:17.0px;border:1px solid #cfd2d7;border-radius:3px;box-sizing:border-box;background:#fff;"></div>
<svg style="position:absolute;left:586.0px;top:759.5px;overflow:visible;" width="15" height="15" viewBox="0 0 15 15"><rect x="6.4" y="0" width="2.2" height="15" fill="#a0a3a8"/><rect x="0" y="6.4" width="15" height="2.2" fill="#a0a3a8"/></svg>
<div class="t" style="left:616.60px;top:754.86px;font-size:18px;line-height:23px;font-weight:400;color:#2d5aa0;">mejores</div>
<div class="t" style="left:617.04px;top:777.26px;font-size:18px;line-height:23px;font-weight:400;color:#2d5aa0;">arneses para</div>
<div class="t" style="left:616.64px;top:799.66px;font-size:18px;line-height:23px;font-weight:400;color:#2d5aa0;">perros</div>
<div style="position:absolute;left:745px;top:755.6px;width:21.7px;height:21.7px;background:#cfe0f3;border-radius:4px;color:#4a4d52;font-size:15px;line-height:22.5px;text-align:center;">I</div>
<div style="position:absolute;left:772px;top:755.6px;width:22.8px;height:21.7px;background:#f8e08e;border-radius:4px;color:#4a4d52;font-size:15px;line-height:22.5px;text-align:center;">C</div>
<div style="position:absolute;left:856.3px;top:753.0px;width:29.4px;height:27.3px;background:#7dc89a;border-radius:4px;color:#333;font-size:18px;line-height:28.5px;text-align:center;">0</div>
<div class="t" style="left:912.61px;top:754.86px;font-size:18px;line-height:23px;font-weight:400;color:#31353c;transform:scaleX(1.0977);transform-origin:0 0;">200</div>
<svg style="position:absolute;left:950px;top:750px;" width="100" height="34" viewBox="950 750 100 34"><defs><linearGradient id="gb" x1="0" y1="0" x2="0" y2="1"><stop offset="0" stop-color="#cfe2f6"/><stop offset="1" stop-color="#e9f1fa"/></linearGradient><linearGradient id="go" x1="0" y1="0" x2="0" y2="1"><stop offset="0" stop-color="#fcdcbf"/><stop offset="1" stop-color="#fdeee0"/></linearGradient><linearGradient id="gg" x1="0" y1="0" x2="0" y2="1"><stop offset="0" stop-color="#e4e4e4"/><stop offset="1" stop-color="#f9f9f9"/></linearGradient></defs><path d="M960 760.4 C970 764 978 764.5 990 761 C1002 757.5 1012 754.5 1024 756 C1032 757 1037 758 1040 759.2 V780 H960 Z" fill="url(#gg)"/><path d="M960 760.4 C970 764 978 764.5 990 761 C1002 757.5 1012 754.5 1024 756 C1032 757 1037 758 1040 759.2" fill="none" stroke="#b0b0b0" stroke-width="1.3"/></svg>
<div style="position:absolute;left:1063.0px;top:762.8px;width:31.0px;height:8.0px;background:#3a86d4;"></div>
<div style="position:absolute;left:1094.0px;top:762.8px;width:11.0px;height:8.0px;background:#f6c513;"></div>
<div class="t" style="left:1132.37px;top:754.86px;font-size:18px;line-height:23px;font-weight:400;color:#31353c;">450</div>
<div class="t" style="left:1189.97px;top:754.86px;font-size:18px;line-height:23px;font-weight:400;color:#31353c;">450</div>
<div style="position:absolute;left:1560.0px;top:753.3px;width:66.5px;height:26.2px;border:1px solid #c9cbcf;border-radius:3px;box-sizing:border-box;background:#fff;"></div>
<svg style="position:absolute;left:1581.0px;top:760.3px;overflow:visible;" width="17" height="12" viewBox="0 0 17 12"><polyline points="1.5,11 6,4 10,8 15.5,1.5" fill="none" stroke="#23262b" stroke-width="2.4" stroke-linejoin="round" stroke-linecap="round"/></svg>
<svg style="position:absolute;left:1606.2px;top:763.6px;overflow:visible;" width="9.5" height="6.5" viewBox="0 0 9.5 6.5"><polyline points="1,1 4.75,5.5 8.5,1" fill="none" stroke="#31353c" stroke-width="1.5" stroke-linecap="round" stroke-linejoin="round"/></svg>
<div style="position:absolute;left:1637.0px;top:753.3px;width:23.0px;height:26.2px;border:1px solid #c9cbcf;border-radius:3px;box-sizing:border-box;background:#fff;"></div>
<div style="position:absolute;left:555.0px;top:831.5px;width:1095.0px;height:1.0px;background:#e7e9ec;"></div>
<div style="position:absolute;left:1246.2px;top:282.6px;width:328.8px;height:514.4px;background:#fff;border:1px solid #dddfe2;border-radius:3px;box-sizing:border-box;box-shadow:0 5px 16px rgba(0,0,0,0.13);"></div>
<svg style="position:absolute;left:1261.5px;top:296.5px;overflow:visible;" width="15" height="15" viewBox="0 0 15 15"><circle cx="6" cy="6" r="4.6" fill="none" stroke="#23262b" stroke-width="2.3"/><line x1="9.5" y1="9.5" x2="13.6" y2="13.6" stroke="#23262b" stroke-width="2.5" stroke-linecap="round"/></svg>
<div style="position:absolute;left:1288.0px;top:294.0px;width:1.3px;height:20.4px;background:#333;"></div>
<div class="t" style="left:1288.03px;top:293.26px;font-size:18px;line-height:23px;font-weight:400;color:#a9acb1;">Búsqueda</div>
<div style="position:absolute;left:1247.0px;top:325.8px;width:309.0px;height:1.0px;background:#e7e9ec;"></div>
<div class="t" style="left:1259.51px;top:337.46px;font-size:18px;line-height:23px;font-weight:700;color:#2a2e35;transform:scaleX(0.9343);transform-origin:0 0;">Casos de uso</div>
<div class="t" style="left:1258.70px;top:369.16px;font-size:18px;line-height:23px;font-weight:400;color:#31353c;transform:scaleX(1.0130);transform-origin:0 0;">En tendencia</div>
<div class="t" style="left:1260.16px;top:401.66px;font-size:18px;line-height:23px;font-weight:400;color:#31353c;transform:scaleX(1.0125);transform-origin:0 0;">Alto volumen, baja competencia</div>
<div class="t" style="left:1258.70px;top:434.16px;font-size:18px;line-height:23px;font-weight:400;color:#31353c;transform:scaleX(1.0130);transform-origin:0 0;">Baja competencia</div>
<div class="t" style="left:1258.70px;top:466.66px;font-size:18px;line-height:23px;font-weight:400;color:#31353c;transform:scaleX(1.0130);transform-origin:0 0;">Fragmentos destacados</div>
<div class="t" style="left:1259.27px;top:499.16px;font-size:18px;line-height:23px;font-weight:400;color:#31353c;transform:scaleX(1.0130);transform-origin:0 0;">Comercio electrónico</div>
<div class="t" style="left:1258.70px;top:531.66px;font-size:18px;line-height:23px;font-weight:400;color:#31353c;transform:scaleX(1.0130);transform-origin:0 0;">Local</div>
<div class="t" style="left:1258.70px;top:564.16px;font-size:18px;line-height:23px;font-weight:400;color:#31353c;transform:scaleX(1.0130);transform-origin:0 0;">Noticias</div>
<div class="t" style="left:1258.70px;top:596.66px;font-size:18px;line-height:23px;font-weight:400;color:#31353c;transform:scaleX(1.0130);transform-origin:0 0;">Foros y comunidades</div>
<div class="t" style="left:1258.70px;top:629.16px;font-size:18px;line-height:23px;font-weight:400;color:#31353c;transform:scaleX(1.0130);transform-origin:0 0;">Long-tail</div>
<div class="t" style="left:1258.70px;top:661.66px;font-size:18px;line-height:23px;font-weight:400;color:#31353c;transform:scaleX(1.0130);transform-origin:0 0;">Descubierto recientemente</div>
<div class="t" style="left:1258.70px;top:694.16px;font-size:18px;line-height:23px;font-weight:400;color:#31353c;transform:scaleX(1.0130);transform-origin:0 0;">Estacional</div>
<div style="position:absolute;left:1247.0px;top:726.0px;width:309.0px;height:1.0px;background:#e7e9ec;"></div>
<div class="t" style="left:1259.49px;top:738.46px;font-size:18px;line-height:23px;font-weight:700;color:#2a2e35;transform:scaleX(0.9653);transform-origin:0 0;">Ciclo de vida del usuario</div>
<div class="t" style="left:1258.70px;top:771.46px;font-size:18px;line-height:23px;font-weight:400;color:#31353c;transform:scaleX(1.0130);transform-origin:0 0;">Parte superior del embudo</div>
<svg style="position:absolute;left:1560.0px;top:289.5px;overflow:visible;" width="12" height="9" viewBox="0 0 12 9"><path d="M6 0 L12 9 H0 Z" fill="#a3a3a3"/></svg>
<div style="position:absolute;left:1560.5px;top:306.0px;width:10.3px;height:194.4px;background:#8c8c8c;border-radius:5px;"></div>
<svg style="position:absolute;left:1560.0px;top:782.0px;overflow:visible;" width="12" height="9" viewBox="0 0 12 9"><path d="M0 0 H12 L6 9 Z" fill="#a3a3a3"/></svg>
<div style="position:absolute;left:229.6px;top:55.8px;width:43.5px;height:43.5px;border-radius:50%;background:#f5720f;border:2.5px solid #fff;box-sizing:border-box;box-shadow:0 1px 3px rgba(0,0,0,0.25);color:#fff;font-weight:700;font-size:25px;line-height:39.5px;text-align:center;">1</div>
<div style="position:absolute;left:204.2px;top:239.2px;width:44.5px;height:44.5px;border-radius:50%;background:#f5720f;border:2.5px solid #fff;box-sizing:border-box;box-shadow:0 1px 3px rgba(0,0,0,0.25);color:#fff;font-weight:700;font-size:25px;line-height:40.5px;text-align:center;">2</div>
<div style="position:absolute;left:1457.2px;top:486.1px;width:44.5px;height:44.5px;border-radius:50%;background:#f5720f;border:2.5px solid #fff;box-sizing:border-box;box-shadow:0 1px 3px rgba(0,0,0,0.25);color:#fff;font-weight:700;font-size:25px;line-height:40.5px;text-align:center;">3</div>
<div style="position:absolute;left:1605px;top:784px;width:50px;height:50px;border-radius:50%;background:#2e3a52;color:#fff;font-weight:400;font-size:30px;line-height:50px;text-align:center;-webkit-text-stroke:1.1px #fff;">?</div>
</body></html>
